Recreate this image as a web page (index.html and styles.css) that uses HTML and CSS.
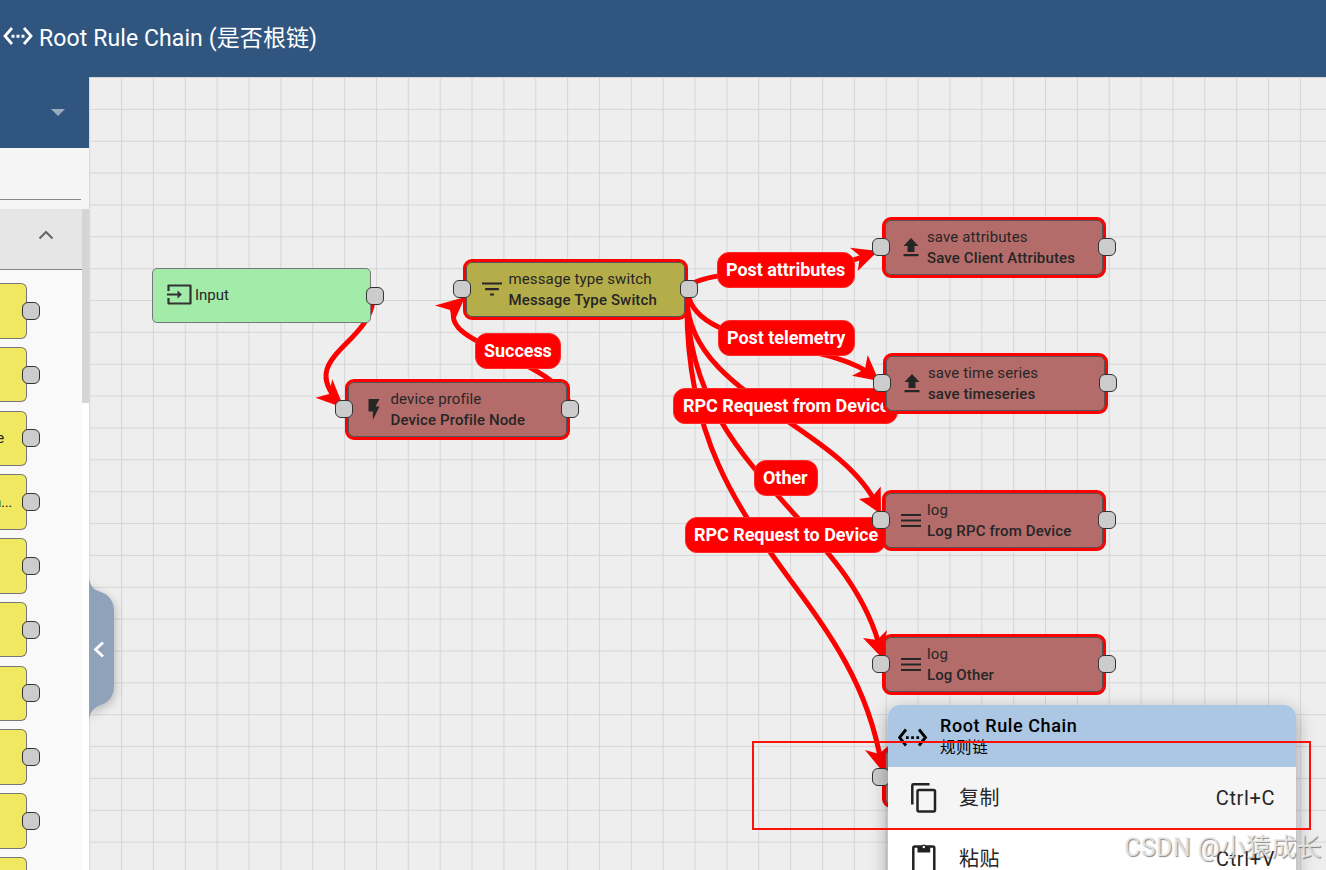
FILE: index.html
```html
<!DOCTYPE html>
<html lang="zh-CN">
<head>
  <meta charset="UTF-8" />
  <meta name="viewport" content="width=device-width, initial-scale=1.0" />
  <title>Root Rule Chain</title>
  <link rel="stylesheet" href="styles.css">
</head>
<body>

  <header class="topbar">
    <svg class="topbar-icon" viewBox="0 0 30 20">
      <path d="M9 2L2 10l7 8M21 2l7 8-7 8" fill="none" stroke="currentColor" stroke-width="2.8"/>
      <path d="M8.500 8.700h3v3h-3zM13.500 8.700h3v3h-3zM18.500 8.700h3v3h-3z" fill="currentColor"/>
    </svg>
    <h1>Root Rule Chain (是否根链)</h1>
  </header>

  <div class="main">
    <!-- Node library -->
    <aside class="library">
      <div class="library-head"><span class="caret"></span></div>
      <div class="search"><div class="search-line"></div></div>
      <div class="scroll">
        <div class="scroll-content">
          <div class="group-head">
            <svg width="16" height="10" viewBox="0 0 16 10"><path d="M1.5 8.5L8 2l6.5 6.5" fill="none" stroke="#666" stroke-width="2"/></svg>
          </div>
          <div class="items">
            <div class="item"><i class="port"></i></div>
            <div class="item"><i class="port"></i></div>
            <div class="item"><span class="item-text short">e</span><i class="port"></i></div>
            <div class="item"><span class="item-text">n...</span><i class="port"></i></div>
            <div class="item"><i class="port"></i></div>
            <div class="item"><i class="port"></i></div>
            <div class="item"><i class="port"></i></div>
            <div class="item"><i class="port"></i></div>
            <div class="item"><i class="port"></i></div>
            <div class="item"><i class="port"></i></div>
          </div>
        </div>
        <div class="track"><div class="thumb"></div></div>
      </div>
    </aside>

    <!-- Rule chain canvas -->
    <main class="canvas">
      <svg class="edges" viewBox="89 77 1237 793">
        <defs>
          <pattern id="grid" x="89.2" y="77" width="31.86" height="31.86" patternUnits="userSpaceOnUse">
            <path d="M.5 0v31.86M0 .5h31.86" stroke="#000" stroke-opacity=".1" fill="none"/>
          </pattern>
        </defs>
        <rect x="89" y="77" width="1237" height="793" fill="url(#grid)"/>
        <g class="wires">
          <path d="M373 300C369 345 296 358 340 403"/>
          <path d="M570 404C550 354 428 345 458 303"/>
          <path d="M690 285C720 265 840 275 872 252"/>
          <path d="M689 298C705 350 830 340 873 376"/>
          <path d="M687 298C688 395 840 425 878 507"/>
          <path d="M687 298C688 470 850 520 881 652"/>
          <path d="M687 298C683 540 850 582 881 762"/>
        </g>
        <g class="heads">
          <path d="M344 408L315.5 397.7 329 394 332.3 379.3Z"/>
          <path d="M465 297L435 305.5 450 310 453 324Z"/>
          <path d="M878 251L850 247.7 860 256 857.7 271Z"/>
          <path d="M879 381L867.7 355 865 369 852 375.7Z"/>
          <path d="M881 514L880.7 486.5 872 497 859 499Z"/>
          <path d="M882 658L887 630 877 640 863 638Z"/>
          <path d="M883 772L888 746 879 754 865 750Z"/>
        </g>
      </svg>

      <div class="label l-success">Success</div>
      <div class="label l-attributes">Post attributes</div>
      <div class="label l-telemetry">Post telemetry</div>
      <div class="label l-rpc-from">RPC Request from Device</div>
      <div class="label l-other">Other</div>
      <div class="label l-rpc-to">RPC Request to Device</div>

      <div class="node input">
        <svg width="25" height="22" viewBox="0 0 25 22"><path d="M1.5 7V1.5h22v18h-22V14M0 10.5h13" fill="none" stroke="#333" stroke-width="2.200" stroke-linejoin="round"/><path d="M10.500 6.500l4.500 4-4.500 4z" fill="#333"/></svg>
        <span>Input</span>
        <i class="port right"></i>
      </div>

      <div class="node rule switch">
        <svg class="icon" viewBox="0 0 20 20"><path d="M0 3.5h20M3.2 9.2h13.6M8 14.500h4" stroke="#262626" stroke-width="2.2"/></svg>
        <div class="node-text"><span>message type switch</span><b>Message Type Switch</b></div>
        <i class="port left"></i><i class="port right"></i>
      </div>

      <div class="node rule profile">
        <svg class="icon" viewBox="0 0 20 20"><path d="M4.5-1h11l-4 7.5h4L8.8 20v-8.500H4.500z" fill="#262626"/></svg>
        <div class="node-text"><span>device profile</span><b>Device Profile Node</b></div>
        <i class="port left"></i><i class="port right"></i>
      </div>

      <div class="node rule save-attributes">
        <svg class="icon" viewBox="0 0 20 20"><path d="M10 0l7.500 8H13.500v6h-7V8H2.500zM2.500 16h15v2.200h-15z" fill="#262626"/></svg>
        <div class="node-text"><span>save attributes</span><b>Save Client Attributes</b></div>
        <i class="port left"></i><i class="port right"></i>
      </div>

      <div class="node rule save-timeseries">
        <svg class="icon" viewBox="0 0 20 20"><path d="M10 0l7.500 8H13.500v6h-7V8H2.500zM2.500 16h15v2.200h-15z" fill="#262626"/></svg>
        <div class="node-text"><span>save time series</span><b>save timeseries</b></div>
        <i class="port left"></i><i class="port right"></i>
      </div>

      <div class="node rule log-rpc">
        <svg class="icon" viewBox="0 0 20 20"><path d="M0 4h20M0 9.500h20M0 15h20" stroke="#262626" stroke-width="2.200"/></svg>
        <div class="node-text"><span>log</span><b>Log RPC from Device</b></div>
        <i class="port left"></i><i class="port right"></i>
      </div>

      <div class="node rule log-other">
        <svg class="icon" viewBox="0 0 20 20"><path d="M0 4h20M0 9.500h20M0 15h20" stroke="#262626" stroke-width="2.200"/></svg>
        <div class="node-text"><span>log</span><b>Log Other</b></div>
        <i class="port left"></i><i class="port right"></i>
      </div>

      <div class="node rule rpc-call"><i class="port left"></i></div>

      <!-- Collapse handle of the library -->
      <svg class="handle" width="26" height="140" viewBox="0 0 26 140">
        <path d="M0 0C2 9 6 11 12 13C20 16 25 22 25 32V107C25 117 20 123 12 126C6 128 2 131 0 140Z" fill="#90a2b9"/>
        <path d="M14 63.500L6.500 70.500l7.500 7" fill="none" stroke="#fff" stroke-width="2.800"/>
      </svg>

      <!-- Context menu -->
      <div class="menu">
        <div class="menu-head">
          <svg width="30" height="20" viewBox="0 0 30 20">
            <path d="M8 2.500L1.500 10.500l6.500 8M21 2.500l6.500 8-6.500 8" fill="none" stroke="#000" stroke-width="2.800"/>
            <path d="M8 9.200h2.700v2.700H8zM13.200 9.200h2.700v2.700h-2.700zM18.400 9.200h2.700v2.700h-2.700z" fill="#000"/>
          </svg>
          <div class="menu-title"><strong>Root Rule Chain</strong><small>规则链</small></div>
        </div>
        <div class="menu-item active">
          <svg width="26" height="30" viewBox="0 0 26 30"><path d="M1.300 21.500V2.500Q1.300 1.300 2.500 1.300H18.500" fill="none" stroke="#222" stroke-width="2.500"/><rect x="6.500" y="7" width="17.500" height="21.500" rx="1.500" fill="none" stroke="#222" stroke-width="2.500"/></svg>
          <span>复制</span><kbd>Ctrl+C</kbd>
        </div>
        <div class="menu-item">
          <svg width="26" height="30" viewBox="0 0 26 30"><rect x="2.300" y="2.500" width="21" height="26" rx="1.500" fill="none" stroke="#222" stroke-width="2.500"/><path d="M6.500 2.500H10a3 3 0 0 1 5.600 0h3.600v6H6.500z" fill="#222"/><circle cx="12.800" cy="3" r="1.200" fill="#fff"/></svg>
          <span>粘贴</span><kbd>Ctrl+V</kbd>
        </div>
      </div>

      <div class="highlight"></div>
      <div class="watermark">CSDN @小猿成长</div>
    </main>
  </div>

</body>
</html>
```
FILE: styles.css
```css
* {
  box-sizing: border-box;
}

body {
  margin: 0;
  height: 870px;
  display: flex;
  flex-direction: column;
  overflow: hidden;
  font-family: Roboto, 'Noto Sans CJK SC', sans-serif;
  color: #262626;
}

.topbar {
  flex: none;
  height: 77px;
  padding: 0 0 5px 3px;
  display: flex;
  align-items: center;
  gap: 6px;
  background: #305680;
  color: #fff;
}

.topbar-icon {
  width: 30px;
  height: 20px;
}

.topbar h1 {
  margin: 0;
  font-size: 23px;
  font-weight: 400;
  letter-spacing: 0.100px;
  white-space: nowrap;
}

.main {
  flex: 1;
  min-height: 0;
  display: flex;
}

/* Node library */
.library {
  flex: none;
  width: 89px;
  display: flex;
  flex-direction: column;
  background: #f5f5f5;
}

.library-head {
  flex: none;
  height: 71px;
  background: #305680;
  display: flex;
  justify-content: flex-end;
  align-items: center;
  padding-right: 24px;
}

.caret {
  border: 7px solid transparent;
  border-top-color: #9aabc0;
  border-bottom: 0;
}

.search {
  flex: none;
  height: 61px;
  padding-right: 8px;
}

.search-line {
  height: 52px;
  border-bottom: 1px solid #888;
}

.scroll {
  flex: 1;
  min-height: 0;
  display: flex;
}

.scroll-content {
  width: 82px;
  background: #f9f9f9;
  overflow: hidden;
}

.group-head {
  height: 61px;
  padding: 21px 28px 14px 0;
  display: flex;
  justify-content: flex-end;
  background: #e6e6e6;
  border-bottom: 1px solid #888;
}

.track {
  width: 7px;
  background: #fff;
}

.thumb {
  height: 194px;
  background: #d5d5d5;
}

.items {
  display: flex;
  flex-direction: column;
  gap: 8.250px;
  padding-top: 13px;
}

.item {
  position: relative;
  flex: none;
  width: 27px;
  height: 55.500px;
  display: flex;
  align-items: center;
  justify-content: flex-end;
  background: #f0e860;
  border: 1px solid #777;
  border-left: 0;
  border-radius: 0 6px 6px 0;
  font-size: 15px;
}

.item-text {
  padding-right: 14px;
  letter-spacing: -0.300px;
}

.item-text.short {
  padding-right: 22px;
}

.port {
  position: absolute;
  top: 50%;
  width: 18px;
  height: 18px;
  margin-top: -9px;
  background: #ccc;
  border: 1px solid #333;
  border-radius: 6px;
}

.item .port {
  right: -14px;
}

/* Canvas */
.canvas {
  position: relative;
  flex: 1;
  overflow: hidden;
  background: #eee;
}

.edges {
  display: block;
  width: 1237px;
  height: 793px;
}

.wires path {
  fill: none;
  stroke: #f00;
  stroke-width: 5;
}

.heads path {
  fill: #f00;
}

.label {
  position: absolute;
  height: 36px;
  padding: 0 8px;
  border-radius: 12px;
  background: #f00;
  border: 1px solid #ff2a2a;
  color: #fff;
  font-size: 18px;
  font-weight: 700;
  letter-spacing: -0.050px;
  line-height: 34px;
  white-space: nowrap;
}

.l-success { left: 386px; top: 256px; width: 86px; }
.l-attributes { left: 628px; top: 175px; width: 138px; }
.l-telemetry { left: 629px; top: 243px; width: 137px; }
.l-rpc-from { left: 584px; top: 311px; width: 225px; padding-left: 9px; }
.l-other { left: 665px; top: 383px; width: 64px; }
.l-rpc-to { left: 596px; top: 440px; width: 201px; }

.node {
  position: absolute;
  display: flex;
  align-items: center;
  font-size: 15px;
  white-space: nowrap;
}

.node.input {
  left: 63px;
  top: 191px;
  width: 219px;
  height: 55px;
  padding: 0 0 2px 14px;
  gap: 3px;
  background: #a3eba9;
  border: 1px solid #777;
  border-radius: 5px;
}

.input .port.right {
  right: -14px;
}

.rule {
  width: 224px;
  height: 61px;
  padding-left: 16px;
  gap: 6px;
  background: #b46c6a;
  border: 3px solid #f00;
  border-radius: 9px;
  box-shadow: inset 0 0 0 1px #555;
}

.rule .port { margin-top: -9.500px; }
.rule .port.left { left: -13px; }
.rule .port.right { right: -13px; }

.switch { left: 374px; top: 182px; width: 225px; background: #b5ad4a; }
.profile { left: 256px; top: 302px; width: 225px; }
.save-attributes { left: 793px; top: 140px; }
.save-timeseries { left: 794px; top: 276px; width: 225px; }
.log-rpc { left: 793px; top: 413px; }
.log-other { left: 793px; top: 557px; }
.rpc-call { left: 793px; top: 670px; }

.profile .port.right,
.save-timeseries .port.right { right: -12px; }

.icon {
  width: 20px;
  height: 20px;
  overflow: visible;
}

.node-text {
  display: flex;
  flex-direction: column;
  line-height: 20.500px;
  letter-spacing: 0.130px;
}

.node-text b {
  font-weight: 500;
}

.switch .node-text,
.profile .node-text {
  padding-left: 0.500px;
}

.handle {
  position: absolute;
  left: 0;
  top: 502px;
  overflow: visible;
  filter: drop-shadow(2px 3px 4px rgba(0, 0, 0, 0.2));
}

/* Context menu */
.menu {
  position: absolute;
  left: 799px;
  top: 628px;
  width: 408px;
  height: 220px;
  background: #fff;
  border-radius: 12px;
  overflow: hidden;
  box-shadow: 0 6px 18px rgba(0, 0, 0, 0.35);
  letter-spacing: 0.600px;
}

.menu-head {
  height: 62px;
  padding: 2px 10px 0;
  display: flex;
  align-items: center;
  gap: 12px;
  background: #abc7e4;
  color: #000;
}

.menu-title {
  display: flex;
  flex-direction: column;
}

.menu-title strong {
  font-size: 18px;
  font-weight: 500;
  line-height: 22px;
}

.menu-title small {
  font-size: 15.500px;
  line-height: 23px;
}

.menu-item {
  height: 61px;
  padding: 0 21px 0 23px;
  display: flex;
  align-items: center;
  font-size: 20px;
}

.menu-item span {
  flex: 1;
  padding: 0 0 2px 22px;
}

.menu-item kbd {
  font-family: inherit;
}

.menu-item.active {
  background: #f5f5f5;
}

.highlight {
  position: absolute;
  left: 663px;
  top: 664px;
  width: 559px;
  height: 89px;
  border: 2px solid #fa1208;
}

.watermark {
  position: absolute;
  right: 4px;
  top: 753px;
  color: rgba(235, 235, 235, 0.85);
  font-size: 25px;
  letter-spacing: 0.400px;
  line-height: 36px;
  text-shadow: 1px 1px 1px rgba(90, 90, 90, 0.7);
  white-space: nowrap;
}
```
